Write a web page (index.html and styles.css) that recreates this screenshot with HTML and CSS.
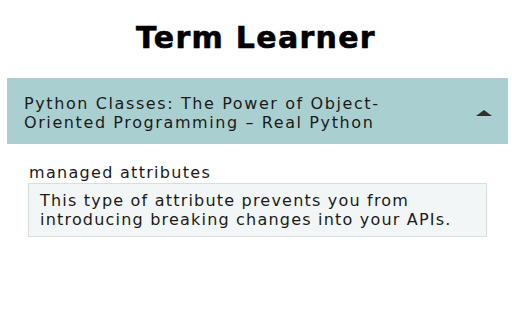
FILE: index.html
```html
<!DOCTYPE html>
<html lang="en">
<head>
<meta charset="utf-8">
<title>Term Learner</title>
<link rel="stylesheet" href="styles.css">
</head>
<body>
<h1 class="title">Term Learner</h1>
<section class="source">
  <div class="source-head">
    <span class="source-title">Python Classes: The Power of Object-Oriented Programming – Real Python</span>
    <span class="caret"></span>
  </div>
</section>
<div class="term">
  <div class="term-name">managed attributes</div>
  <div class="term-def">This type of attribute prevents you from introducing breaking changes into your APIs.</div>
</div>
</body>
</html>
```
FILE: styles.css
```css
html, body {
  margin: 0;
  padding: 0;
  background: #ffffff;
}
body {
  font-family: "DejaVu Sans", "Liberation Sans", sans-serif;
  color: #1a1a1a;
}
.title {
  margin: 20px 0 22px;
  font-size: 30px;
  line-height: 36px;
  font-weight: 700;
  letter-spacing: 1.3px;
  text-align: center;
  color: #000;
  -webkit-text-stroke: 0.6px #000;
}
.source {
  margin: 0 4px 0 7px;
  background: #aacfd1;
}
.source-head {
  display: flex;
  align-items: center;
  padding: 16px 16px 12px 17px;
}
.source-title {
  flex: 0 1 392px;
  font-size: 16px;
  line-height: 19px;
  letter-spacing: 1.6px;
  margin-right: auto;
}
.caret {
  width: 0;
  height: 0;
  border-left: 8px solid transparent;
  border-right: 8px solid transparent;
  border-bottom: 6px solid #2f2f2f;
}
.term {
  margin: 19px 25px 0 28px;
}
.term-name {
  font-size: 16px;
  line-height: 19px;
  letter-spacing: 1.3px;
  padding-left: 1px;
  margin-bottom: 1px;
}
.term-def {
  background: #f2f6f7;
  border: 1px solid #dadddd;
  box-shadow: 0 1px 2px rgba(0,0,0,0.06);
  padding: 7px 11px 7px 11px;
  font-size: 16px;
  line-height: 19px;
  letter-spacing: 1.2px;
}
```
